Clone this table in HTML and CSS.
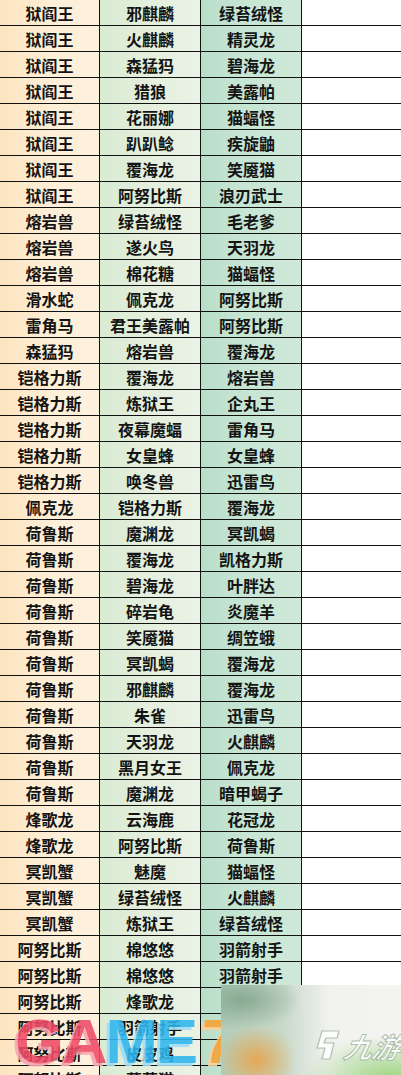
FILE: index.html
```html
<!DOCTYPE html>
<html lang="zh">
<head>
<meta charset="utf-8">
<title>表格</title>
<link rel="stylesheet" href="styles.css">
</head>
<body>
<div class="sheet">
  <div class="c a">狱阎王</div><div class="c b">邪麒麟</div><div class="c d">绿苔绒怪</div><div class="c e"></div>
  <div class="c a">狱阎王</div><div class="c b">火麒麟</div><div class="c d">精灵龙</div><div class="c e"></div>
  <div class="c a">狱阎王</div><div class="c b">森猛犸</div><div class="c d">碧海龙</div><div class="c e"></div>
  <div class="c a">狱阎王</div><div class="c b">猎狼</div><div class="c d">美露帕</div><div class="c e"></div>
  <div class="c a">狱阎王</div><div class="c b">花丽娜</div><div class="c d">猫蝠怪</div><div class="c e"></div>
  <div class="c a">狱阎王</div><div class="c b">趴趴鲶</div><div class="c d">疾旋鼬</div><div class="c e"></div>
  <div class="c a">狱阎王</div><div class="c b">覆海龙</div><div class="c d">笑魇猫</div><div class="c e"></div>
  <div class="c a">狱阎王</div><div class="c b">阿努比斯</div><div class="c d">浪刃武士</div><div class="c e"></div>
  <div class="c a">熔岩兽</div><div class="c b">绿苔绒怪</div><div class="c d">毛老爹</div><div class="c e"></div>
  <div class="c a">熔岩兽</div><div class="c b">遂火鸟</div><div class="c d">天羽龙</div><div class="c e"></div>
  <div class="c a">熔岩兽</div><div class="c b">棉花糖</div><div class="c d">猫蝠怪</div><div class="c e"></div>
  <div class="c a">滑水蛇</div><div class="c b">佩克龙</div><div class="c d">阿努比斯</div><div class="c e"></div>
  <div class="c a">雷角马</div><div class="c b">君王美露帕</div><div class="c d">阿努比斯</div><div class="c e"></div>
  <div class="c a">森猛犸</div><div class="c b">熔岩兽</div><div class="c d">覆海龙</div><div class="c e"></div>
  <div class="c a">铠格力斯</div><div class="c b">覆海龙</div><div class="c d">熔岩兽</div><div class="c e"></div>
  <div class="c a">铠格力斯</div><div class="c b">炼狱王</div><div class="c d">企丸王</div><div class="c e"></div>
  <div class="c a">铠格力斯</div><div class="c b">夜幕魔蝠</div><div class="c d">雷角马</div><div class="c e"></div>
  <div class="c a">铠格力斯</div><div class="c b">女皇蜂</div><div class="c d">女皇蜂</div><div class="c e"></div>
  <div class="c a">铠格力斯</div><div class="c b">唤冬兽</div><div class="c d">迅雷鸟</div><div class="c e"></div>
  <div class="c a">佩克龙</div><div class="c b">铠格力斯</div><div class="c d">覆海龙</div><div class="c e"></div>
  <div class="c a">荷鲁斯</div><div class="c b">魔渊龙</div><div class="c d">冥凯蝎</div><div class="c e"></div>
  <div class="c a">荷鲁斯</div><div class="c b">覆海龙</div><div class="c d">凯格力斯</div><div class="c e"></div>
  <div class="c a">荷鲁斯</div><div class="c b">碧海龙</div><div class="c d">叶胖达</div><div class="c e"></div>
  <div class="c a">荷鲁斯</div><div class="c b">碎岩龟</div><div class="c d">炎魔羊</div><div class="c e"></div>
  <div class="c a">荷鲁斯</div><div class="c b">笑魇猫</div><div class="c d">绸笠蛾</div><div class="c e"></div>
  <div class="c a">荷鲁斯</div><div class="c b">冥凯蝎</div><div class="c d">覆海龙</div><div class="c e"></div>
  <div class="c a">荷鲁斯</div><div class="c b">邪麒麟</div><div class="c d">覆海龙</div><div class="c e"></div>
  <div class="c a">荷鲁斯</div><div class="c b">朱雀</div><div class="c d">迅雷鸟</div><div class="c e"></div>
  <div class="c a">荷鲁斯</div><div class="c b">天羽龙</div><div class="c d">火麒麟</div><div class="c e"></div>
  <div class="c a">荷鲁斯</div><div class="c b">黑月女王</div><div class="c d">佩克龙</div><div class="c e"></div>
  <div class="c a">荷鲁斯</div><div class="c b">魔渊龙</div><div class="c d">暗甲蝎子</div><div class="c e"></div>
  <div class="c a">烽歌龙</div><div class="c b">云海鹿</div><div class="c d">花冠龙</div><div class="c e"></div>
  <div class="c a">烽歌龙</div><div class="c b">阿努比斯</div><div class="c d">荷鲁斯</div><div class="c e"></div>
  <div class="c a">冥凯蟹</div><div class="c b">魅魔</div><div class="c d">猫蝠怪</div><div class="c e"></div>
  <div class="c a">冥凯蟹</div><div class="c b">绿苔绒怪</div><div class="c d">火麒麟</div><div class="c e"></div>
  <div class="c a">冥凯蟹</div><div class="c b">炼狱王</div><div class="c d">绿苔绒怪</div><div class="c e"></div>
  <div class="c a">阿努比斯</div><div class="c b">棉悠悠</div><div class="c d">羽箭射手</div><div class="c e"></div>
  <div class="c a">阿努比斯</div><div class="c b">棉悠悠</div><div class="c d">羽箭射手</div><div class="c e"></div>
  <div class="c a">阿努比斯</div><div class="c b">烽歌龙</div><div class="c d"></div><div class="c e"></div>
  <div class="c a">阿努比斯</div><div class="c b">羽箭射手</div><div class="c d"></div><div class="c e"></div>
  <div class="c a">阿努比斯</div><div class="c b">皮皮鸡</div><div class="c d"></div><div class="c e"></div>
  <div class="c a">阿努比斯</div><div class="c b">蔓藤猫</div><div class="c d"></div><div class="c e"></div>
</div>

<div class="mark-game">
  <span class="l red">G</span><span class="l red">A</span><span class="l blue">M</span><span class="l blue">E</span><span class="l orange">7</span>
</div>

<div class="mark-blur">
  <div class="jy">
    <svg class="jy-icon" width="28" height="34" viewBox="0 0 28 34">
      <path d="M9 2 H26 L24 9 H13 L11 14 H21 L17 30 H9 L12 19 H4 Z" fill="rgba(255,255,255,0.85)" stroke="rgba(150,170,150,0.7)" stroke-width="1.2" stroke-linejoin="round"/>
    </svg>
    <span class="jy-text">九游</span>
  </div>
</div>
</body>
</html>
```

FILE: styles.css
```css
html, body {
  margin: 0;
  padding: 0;
  overflow: hidden;
  background: #ffffff;
}

body {
  position: relative;
  width: 401px;
  height: 1075px;
  font-family: "Noto Sans CJK SC", "Noto Sans", sans-serif;
}

.sheet {
  display: grid;
  grid-template-columns: 100px 101px 101px 99px;
  grid-auto-rows: 26px;
}

.c {
  box-sizing: border-box;
  border-right: 1px solid #111;
  border-bottom: 1px solid #111;
  display: flex;
  align-items: center;
  justify-content: center;
  font-size: 16px;
  font-weight: 700;
  color: #141414;
  line-height: 1;
  padding-top: 1px;
  white-space: nowrap;
}

.a {
  background: linear-gradient(90deg, #fde4c0 0%, #fdefd8 55%, #fdf1de 100%);
}

.b {
  background: linear-gradient(90deg, #d9ebd3 0%, #e4efdd 50%, #eaf2e4 100%);
}

.d {
  background: linear-gradient(90deg, #b9dfc9 0%, #c8e6d4 50%, #cfe8d8 100%);
}

.e {
  background: #ffffff;
  border-right: none;
}

.mark-game {
  position: absolute;
  left: 15px;
  top: 1010px;
  display: flex;
  font-family: "Liberation Sans", "DejaVu Sans", sans-serif;
  font-weight: 700;
  font-size: 63px;
  line-height: 1;
  letter-spacing: -2px;
  opacity: 0.88;
}

.l {
  display: block;
}

.red {
  color: #ef4b66;
  text-shadow: -3px 3px 0 #f7a3b0;
}

.blue {
  color: #2fb6ee;
  text-shadow: -3px 3px 0 #9fdcf6;
}

.orange {
  color: #f7a236;
  text-shadow: -3px 3px 0 #fbd19a;
  margin-left: 6px;
}

.mark-blur {
  position: absolute;
  left: 221px;
  top: 985px;
  width: 180px;
  height: 90px;
  background:
    radial-gradient(ellipse 40px 35px at 35px 75px, rgba(230, 165, 80, 0.95), rgba(230, 165, 80, 0) 100%),
    radial-gradient(ellipse 60px 30px at 20px 15px, rgba(130, 165, 140, 0.9), rgba(130, 165, 140, 0) 100%),
    radial-gradient(ellipse 90px 45px at 170px 95px, rgba(150, 210, 120, 0.95), rgba(150, 210, 120, 0) 100%),
    linear-gradient(90deg, #b2cdb9 0%, #c9d9c9 35%, #f1f2f0 60%, #f4f4f3 100%);
}

.jy {
  position: absolute;
  left: 92px;
  top: 44px;
  display: flex;
  align-items: center;
  gap: 4px;
}

.jy-icon {
  display: block;
}

.jy-text {
  font-family: "Noto Sans CJK SC", sans-serif;
  font-weight: 700;
  font-size: 28px;
  line-height: 1;
  font-style: italic;
  color: rgba(255, 255, 255, 0.9);
  -webkit-text-stroke: 1px rgba(140, 165, 140, 0.7);
  transform: skewX(-12deg);
}
```
